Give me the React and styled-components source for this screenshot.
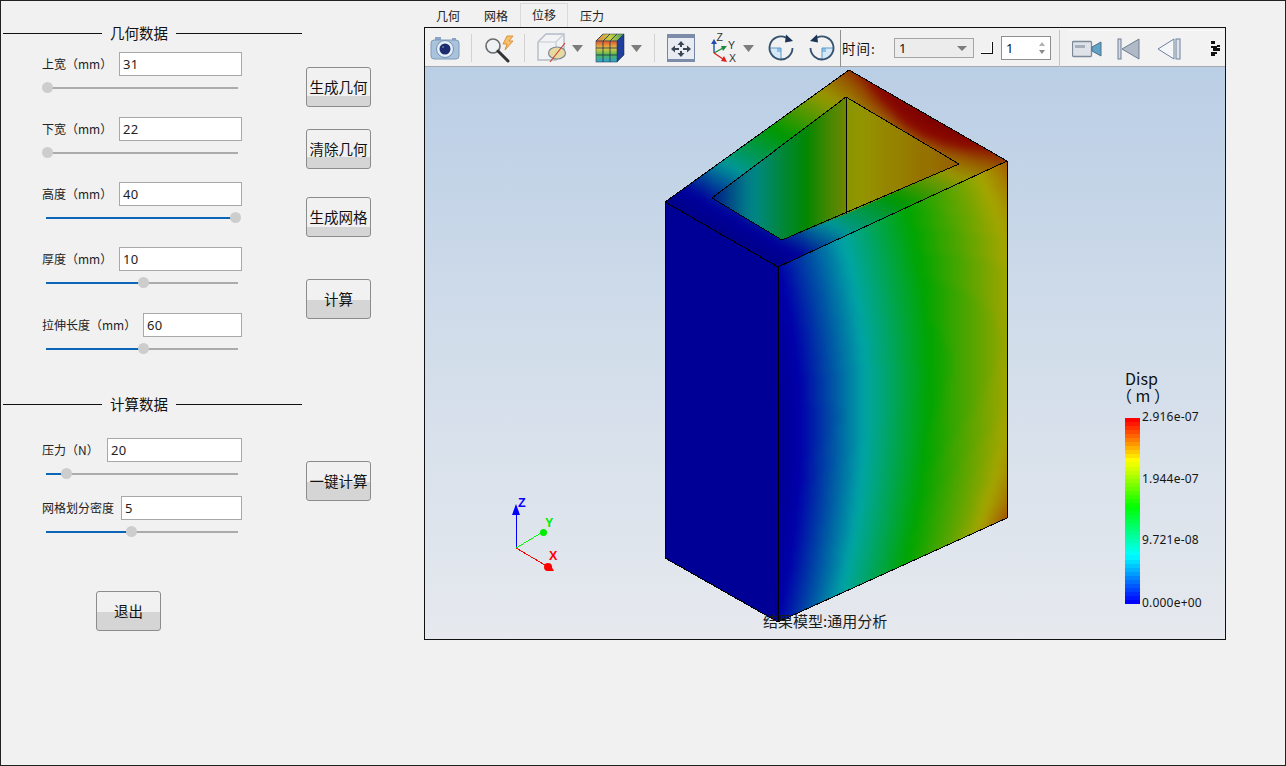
import { useMemo } from "react";
import styled, { createGlobalStyle } from "styled-components";

const CJK = `"Noto Sans CJK SC", "Noto Sans", sans-serif`;

const GlobalStyle = createGlobalStyle`
  html, body {
    margin: 0;
    padding: 0;
    background: #f1f1f1;
    overflow: hidden;
  }
  * {
    box-sizing: border-box;
  }
`;

const Window = styled.div`
  width: 1286px;
  height: 766px;
  display: flex;
  border: 1px solid #222;
  background: #f1f1f1;
  color: #111;
  font-family: ${CJK};
`;

const LeftPane = styled.div`
  width: 423px;
  padding-left: 2px;
  display: flex;
  flex-shrink: 0;
`;

const FormColumn = styled.div`
  width: 299px;
  padding-top: 22px;
`;

const ActionColumn = styled.div`
  margin-left: 4px;
  display: flex;
  flex-direction: column;
  align-items: flex-start;
`;

const Heading = styled.div`
  height: 20px;
  display: flex;
  align-items: center;
  gap: 8px;
  font-size: 14.5px;
  line-height: 20px;
  margin-top: ${(p) => p.$top || 0}px;
  &::before,
  &::after {
    content: "";
    height: 1px;
    background: #111;
  }
  &::before {
    width: 99px;
  }
  &::after {
    flex: 1;
  }
`;

const Field = styled.div`
  padding-left: 39px;
  padding-right: 60px;
  margin-top: ${(p) => p.$top}px;
`;

const FieldRow = styled.div`
  display: flex;
  align-items: center;
  height: 24px;
`;

const FieldLabel = styled.label`
  width: ${(p) => p.$w}px;
  flex-shrink: 0;
  padding-bottom: 2px;
  font-size: 12px;
  white-space: nowrap;
  color: #222;
`;

const NumberInput = styled.input`
  flex: 1;
  min-width: 0;
  height: 24px;
  border: 1px solid #a8a8a8;
  background: #fff;
  padding: 0 3px;
  font-family: "Noto Sans", sans-serif;
  font-size: 13px;
  letter-spacing: 0.4px;
  color: #222;
  outline: none;
`;

const SliderBox = styled.div`
  position: relative;
  height: 24px;
  margin: 0 4px;
  display: flex;
  align-items: center;
`;

const SliderTrack = styled.div`
  width: 100%;
  height: 2px;
  background: #ababab;
`;

const SliderFill = styled.div`
  height: 2px;
  background: #0b66b8;
`;

const SliderHandle = styled.div`
  position: absolute;
  top: 6px;
  width: 11px;
  height: 11px;
  margin-left: -4px;
  border-radius: 50%;
  background: #cdcdcd;
`;

const PushButton = styled.button`
  width: 65px;
  height: 40px;
  padding: 0 0 2px;
  margin-top: ${(p) => p.$top || 0}px;
  margin-left: ${(p) => p.$left || 0}px;
  border: 1px solid #8c8c8c;
  border-radius: 3px;
  background: linear-gradient(
    to bottom,
    #f1f1f1 ${(p) => p.$split}%,
    #d5d5d5 ${(p) => p.$split}%
  );
  font-family: ${CJK};
  font-size: 14.5px;
  white-space: nowrap;
  color: #111;
  display: block;
`;

const RightPane = styled.div`
  width: 802px;
  display: flex;
  flex-direction: column;
`;

const TabBar = styled.div`
  height: 26px;
  display: flex;
  align-items: flex-end;
`;

const Tab = styled.div`
  width: 48px;
  height: ${(p) => (p.$active ? 24 : 22)}px;
  padding-bottom: 2px;
  display: flex;
  align-items: center;
  justify-content: center;
  font-size: 12px;
  color: #222;
  background: #f1f1f1;
  border: ${(p) => (p.$active ? "1px solid #d9d9d9" : "none")};
  border-bottom: none;
`;

const ViewerFrame = styled.div`
  height: 613px;
  border: 1px solid #111;
  display: flex;
  flex-direction: column;
`;

const ToolbarRow = styled.div`
  height: 39px;
  padding-top: 2px;
  display: flex;
  align-items: center;
  background: #f1f1f1;
  border-bottom: 1px solid #a9a9a9;
  flex-shrink: 0;
`;

const ToolSlot = styled.div`
  width: ${(p) => p.$w}px;
  margin-left: ${(p) => p.$ml}px;
  display: flex;
  align-items: center;
  justify-content: center;
  flex-shrink: 0;
`;

const ToolSep = styled.div`
  width: 1px;
  height: ${(p) => p.$h || 28}px;
  margin-left: ${(p) => p.$ml}px;
  background: ${(p) => p.$color || "#d2d2d2"};
  flex-shrink: 0;
`;

const TimeLabel = styled.span`
  margin-left: 1px;
  width: 52px;
  font-size: 13.5px;
  letter-spacing: 1px;
  white-space: nowrap;
  flex-shrink: 0;
`;

const Combo = styled.div`
  width: 80px;
  height: 20px;
  border: 1px solid #a6a6a6;
  background: #ececec;
  display: flex;
  align-items: center;
  justify-content: space-between;
  padding: 0 6px 0 4px;
  font-family: "Noto Sans", sans-serif;
  font-size: 13px;
  flex-shrink: 0;
`;

const ComboArrow = styled.div`
  width: 0;
  height: 0;
  border-left: 5px solid transparent;
  border-right: 5px solid transparent;
  border-top: 5px solid #7c7c7c;
`;

const CornerMark = styled.div`
  width: 12px;
  height: 12px;
  margin-left: 7px;
  border-right: 1px solid #111;
  border-bottom: 1px solid #111;
  box-shadow: inset -1px -1px 0 #fff;
  flex-shrink: 0;
`;

const SpinBox = styled.div`
  width: 50px;
  height: 24px;
  margin-left: 8px;
  border: 1px solid #8f8f8f;
  background: #fff;
  display: flex;
  align-items: center;
  justify-content: space-between;
  padding: 0 5px 0 4px;
  font-family: "Noto Sans", sans-serif;
  font-size: 13px;
  flex-shrink: 0;
`;

const SpinArrows = styled.div`
  display: flex;
  flex-direction: column;
  gap: 4px;
  &::before,
  &::after {
    content: "";
    width: 0;
    height: 0;
    border-left: 3px solid transparent;
    border-right: 3px solid transparent;
  }
  &::before {
    border-bottom: 4px solid #b0b0b0;
  }
  &::after {
    border-top: 4px solid #8a8a8a;
  }
`;

const PlaybackBar = styled.div`
  width: 156px;
  height: 36px;
  margin-left: 8px;
  display: flex;
  align-items: center;
  position: relative;
  background: #f2f2f2;
  border-top: 1px solid #fafafa;
  flex-shrink: 0;
`;

const OverflowMark = styled.svg`
  position: absolute;
  right: 1px;
  top: 9px;
`;

const Viewport = styled.div`
  position: relative;
  flex: 1;
  overflow: hidden;
  background: linear-gradient(to bottom, #bacee5 0%, #d0dcea 45%, #e6e9ee 100%);
`;

const ModelCanvas = styled.svg`
  position: absolute;
  left: 0;
  top: 0;
`;

const Caption = styled.div`
  position: absolute;
  left: 338px;
  top: 544px;
  font-size: 15px;
  line-height: 20px;
  white-space: nowrap;
  color: #1c1c1c;
`;

const Legend = styled.div`
  position: absolute;
  left: 700px;
  top: 303px;
  width: 90px;
`;

const LegendTitle = styled.div`
  font-family: "Noto Sans CJK SC", "Noto Sans", sans-serif;
  font-size: 16px;
  line-height: 17px;
  color: #111;
  white-space: pre;
`;

const LegendUnit = styled(LegendTitle)`
  margin-left: -9px;
`;

const LegendBody = styled.div`
  display: flex;
  margin-top: 14px;
  height: 186px;
`;

const LegendBar = styled.svg`
  flex-shrink: 0;
`;

const LegendTicks = styled.div`
  position: relative;
  margin-left: 2px;
  flex: 1;
`;

const LegendTick = styled.span`
  position: absolute;
  left: 0;
  top: ${(p) => p.$top}px;
  font-family: "Noto Sans", sans-serif;
  font-size: 12px;
  letter-spacing: 0.2px;
  line-height: 14px;
  white-space: nowrap;
  color: #151515;
`;

/* result colouring: value -> dimmed jet, as the solver's shaded view shows it */
const RAMP = [
  [0, [0, 0, 148]],
  [0.1, [0, 0, 170]],
  [0.22, [0, 70, 165]],
  [0.38, [0, 165, 165]],
  [0.66, [0, 165, 0]],
  [0.92, [165, 165, 0]],
  [1.05, [165, 100, 0]],
  [1.2, [150, 10, 0]],
  [1.5, [135, 0, 0]],
];

const shade = (w, dim = 1) => {
  const v = Math.max(0, Math.min(1.5, w));
  let i = 0;
  while (i < RAMP.length - 2 && v > RAMP[i + 1][0]) i++;
  const [a, ca] = RAMP[i];
  const [b, cb] = RAMP[i + 1];
  const t = (v - a) / (b - a);
  const c = ca.map((x, k) => Math.round((x + (cb[k] - x) * t) * dim));
  return `rgb(${c[0]},${c[1]},${c[2]})`;
};

const meshPaths = ([x0, y0, x1, y1], cell, field, dim) => {
  const groups = {};
  for (let x = x0 - 12; x < x1 + 12; x += cell) {
    for (let y = y0 - 12; y < y1 + 12; y += cell) {
      const w = field(x + cell / 2, y + cell / 2);
      const key = Math.round(w * 70) / 70;
      groups[key] = (groups[key] || "") + `M${x} ${y}h${cell}v${cell}h-${cell}z`;
    }
  }
  return Object.entries(groups).map(([w, d]) => ({ d, fill: shade(Number(w), dim) }));
};

const rightField = (x, y) => {
  const u = Math.min(1, Math.max(0, (x - 778) / 229));
  const top = 267 - 106 * u;
  const v = (y - top) / 355;
  const m = Math.abs(v - 0.5) * 2;
  let w = u + 0.4 * (v - 0.5) * (v - 0.5);
  if (w > 0.66) w = 0.66 + (w - 0.66) * 0.72;
  return w + 0.1 * Math.pow(m, 6) * Math.pow(u, 8);
};

const topField = (x, y) => {
  const dx = x - 665;
  const dy = y - 202;
  const d = Math.max(0, (dx * 0.5 - dy * 0.87) / 207);
  const e = ((x - 849) * 158 + (y - 70) * 91) / (182 * 182);
  const hump = Math.exp(-Math.pow((e - 0.5) / 0.3, 2)) * Math.pow(Math.min(d, 1), 10) * 0.45;
  const lift = Math.min(1, Math.max(0, (d - 0.1) / 0.25));
  return d + 0.09 * lift + hump;
};

const wallLeftField = (x) => {
  const u = (x - 712) / 134;
  return 0.16 + 0.72 * u;
};

const wallRightField = (x) => 0.9 + ((x - 846) / 113) * 0.14;

const FACES = [
  {
    id: "left",
    points: "665,202 778,267 778,622 665,558",
    box: [665, 202, 778, 622],
    cell: 20,
    field: () => 0.02,
  },
  {
    id: "right",
    points: "778,267 1007,161 1007,518 778,622",
    box: [778, 161, 1007, 622],
    cell: 5,
    field: rightField,
  },
  {
    id: "top",
    points: "849,70 1007,161 778,267 665,202",
    box: [665, 70, 1007, 267],
    cell: 5,
    field: topField,
    dim: 0.92,
  },
  {
    id: "walla",
    points: "712,198 846,97 846,214 782,240",
    box: [712, 97, 846, 240],
    cell: 5,
    field: wallLeftField,
    dim: 0.82,
  },
  {
    id: "wallb",
    points: "846,97 959,164 846,214",
    box: [846, 97, 959, 214],
    cell: 5,
    field: wallRightField,
    dim: 0.9,
  },
];

const EDGES = [
  "665,202 849,70 1007,161 778,267 665,202",
  "665,202 665,558 778,622 1007,518 1007,161",
  "778,267 778,622",
  "712,198 846,97 959,164 782,240 712,198",
  "846,97 846,214",
];

const Model = () => {
  const faces = useMemo(
    () => FACES.map((f) => ({ ...f, paths: meshPaths(f.box, f.cell, f.field, f.dim) })),
    []
  );
  return (
    <ModelCanvas width="800" height="572" viewBox="425 67 800 572">
      <defs>
        <filter id="soften" colorInterpolationFilters="sRGB" x="-5%" y="-5%" width="110%" height="110%">
          <feGaussianBlur stdDeviation="3" />
        </filter>
        {faces.map((f) => (
          <clipPath id={`face-${f.id}`} key={f.id}>
            <polygon points={f.points} />
          </clipPath>
        ))}
      </defs>
      {faces.map((f) => (
        <g clipPath={`url(#face-${f.id})`} key={f.id}>
          <g filter="url(#soften)" shapeRendering="crispEdges">
            {f.paths.map((p) => (
              <path key={p.fill} d={p.d} fill={p.fill} />
            ))}
          </g>
        </g>
      ))}
      <g fill="none" stroke="#000" strokeWidth="1" shapeRendering="crispEdges">
        {EDGES.map((pts) => (
          <polyline key={pts} points={pts} />
        ))}
      </g>
      <g shapeRendering="crispEdges" strokeWidth="1" fill="none">
        <line x1="516" y1="548" x2="516" y2="512" stroke="#0000ff" />
        <line x1="516" y1="548" x2="541" y2="533" stroke="#00ff00" />
        <line x1="516" y1="548" x2="545" y2="565" stroke="#ff0000" />
      </g>
      <polygon points="516,504 520,515 512,515" fill="#0000ff" />
      <circle cx="543.5" cy="532.5" r="3.5" fill="#00ee00" />
      <circle cx="548" cy="567" r="4" fill="#ff0000" />
      <polygon points="554,571 546,571 550,564" fill="#ff0000" />
      <g fontFamily="Liberation Sans, sans-serif" fontWeight="700" fontSize="12.5">
        <text x="518" y="507" fill="#0000ff">Z</text>
        <text x="545" y="527" fill="#00ee00">Y</text>
        <text x="549" y="560" fill="#ff0000">X</text>
      </g>
    </ModelCanvas>
  );
};

const jetBand = (t) => {
  const stops = [
    [0, [0, 0, 255]],
    [0.255, [0, 255, 255]],
    [0.523, [0, 255, 0]],
    [0.774, [255, 255, 0]],
    [1, [255, 0, 0]],
  ];
  let i = 0;
  while (i < stops.length - 2 && t > stops[i + 1][0]) i++;
  const k = (t - stops[i][0]) / (stops[i + 1][0] - stops[i][0]);
  const c = stops[i][1].map((x, n) => Math.round(x + (stops[i + 1][1][n] - x) * k));
  return `rgb(${c[0]},${c[1]},${c[2]})`;
};

const BANDS = Array.from({ length: 46 }, (_, i) => i);

const ColorLegend = () => (
  <Legend>
    <LegendTitle>Disp</LegendTitle>
    <LegendUnit>（ m ）</LegendUnit>
    <LegendBody>
      <LegendBar width="15" height="186" viewBox="0 0 15 186" shapeRendering="crispEdges">
        {BANDS.map((i) => (
          <rect
            key={i}
            x="0"
            y={(i * 186) / BANDS.length}
            width="15"
            height={186 / BANDS.length + 1}
            fill={jetBand(1 - i / (BANDS.length - 1))}
          />
        ))}
      </LegendBar>
      <LegendTicks>
        <LegendTick $top={-8}>2.916e-07</LegendTick>
        <LegendTick $top={54}>1.944e-07</LegendTick>
        <LegendTick $top={115}>9.721e-08</LegendTick>
        <LegendTick $top={178}>0.000e+00</LegendTick>
      </LegendTicks>
    </LegendBody>
  </Legend>
);

const CameraIcon = () => (
  <svg width="30" height="24" viewBox="0 0 30 24">
    <rect x="5" y="1" width="6" height="4" fill="#8aa6c4" />
    <rect x="22" y="2" width="4" height="3" fill="#8aa6c4" />
    <rect x="1" y="4" width="28" height="19" rx="3" fill="#aac3dd" stroke="#7f9bb8" />
    <circle cx="15" cy="13" r="8.5" fill="#e8eff7" stroke="#7190b2" />
    <circle cx="15" cy="13" r="5.5" fill="#1b2d6e" />
    <circle cx="13" cy="11" r="1" fill="#5f7ab5" />
  </svg>
);

const ZoomBoltIcon = () => (
  <svg width="34" height="30" viewBox="0 0 34 30">
    <circle cx="11" cy="13" r="7" fill="#eef2f5" stroke="#6a6a6a" strokeWidth="1.6" />
    <path d="M16 18 L26 28" stroke="#333" strokeWidth="3" strokeLinecap="round" />
    <path d="M25 3 L31 3 L27 8 L31 8 L23 17 L25 11 L21 11 Z" fill="#f6c070" stroke="#d98a28" strokeWidth="0.9" />
  </svg>
);

const SectionBoxIcon = () => (
  <svg width="30" height="32" viewBox="0 0 30 32">
    <path d="M1 10 L9 2 L27 2 L27 20 L19 28 L1 28 Z" fill="#f1f3f5" stroke="#b4bcc6" strokeWidth="1.4" />
    <path d="M1 10 L19 10 L27 2 M19 10 L19 28" fill="none" stroke="#c5ccd4" strokeWidth="1.2" />
    <ellipse cx="20" cy="21" rx="8.5" ry="6" fill="#e8d9a0" stroke="#7a8794" strokeWidth="1.2" />
    <path d="M13 30 L28 11" stroke="#c8452c" strokeWidth="1.2" />
  </svg>
);

const ResultCubeIcon = () => (
  <svg width="30" height="30" viewBox="0 0 30 30">
    <defs>
      <linearGradient id="cubeFront" x1="0" y1="0" x2="0" y2="1">
        <stop offset="0" stopColor="#e05030" />
        <stop offset="0.35" stopColor="#e8c840" />
        <stop offset="0.65" stopColor="#50b850" />
        <stop offset="1" stopColor="#30a0d8" />
      </linearGradient>
      <linearGradient id="cubeTop" x1="0" y1="0" x2="1" y2="0">
        <stop offset="0" stopColor="#e88040" />
        <stop offset="0.5" stopColor="#c8d040" />
        <stop offset="1" stopColor="#40a060" />
      </linearGradient>
    </defs>
    <path d="M1 8 L8 1 L29 1 L22 8 Z" fill="url(#cubeTop)" stroke="#335" strokeWidth="0.5" />
    <path d="M22 8 L29 1 L29 22 L22 29 Z" fill="#1f3f9f" stroke="#123" strokeWidth="0.5" />
    <rect x="1" y="8" width="21" height="21" fill="url(#cubeFront)" stroke="#345" strokeWidth="0.6" />
    <path d="M8 8 V29 M15 8 V29 M1 15 H22 M1 22 H22 M8 1 L1 8 M15 1 L8 8 M22 1 L15 8" stroke="#24405a" strokeWidth="0.9" fill="none" />
  </svg>
);

const DropArrow = () => (
  <svg width="13" height="7" viewBox="0 0 13 7">
    <path d="M1 0 H12 L6.5 7 Z" fill="#7d7d7d" />
  </svg>
);

const FitIcon = () => (
  <svg width="28" height="28" viewBox="0 0 28 28">
    <rect x="0.5" y="0.5" width="27" height="27" fill="#e8ecf2" stroke="#7486a0" />
    <rect x="0" y="0" width="28" height="4" fill="#7c8ca8" />
    <rect x="0" y="25" width="28" height="3" fill="#7c8ca8" />
    <g fill="#3a4654">
      <path d="M14 7 L17.5 11 H15 V13 H13 V11 H10.5 Z" />
      <path d="M14 23 L17.5 19 H15 V17 H13 V19 H10.5 Z" />
      <path d="M4 15 L8 11.5 V14 H12 V16 H8 V18.5 Z" />
      <path d="M24 15 L20 11.5 V14 H16 V16 H20 V18.5 Z" />
    </g>
  </svg>
);

const AxesIcon = () => (
  <svg width="30" height="32" viewBox="0 0 30 32">
    <path d="M4 21 V11" stroke="#1f4fb0" strokeWidth="1.4" />
    <path d="M4 7 L7 12 H1 Z" fill="#1f4fb0" />
    <path d="M4 21 L13 16" stroke="#1f8a3a" strokeWidth="1.4" />
    <path d="M17 14 L13 19 L11 14 Z" fill="#1f8a3a" />
    <path d="M4 21 L13 27" stroke="#e02020" strokeWidth="1.4" />
    <path d="M17 30 L11 29 L14 24 Z" fill="#e02020" />
    <g fontFamily="Liberation Sans, sans-serif" fontSize="10.5" fill="#333">
      <text x="6.5" y="8.5">Z</text>
      <text x="18" y="16.5">Y</text>
      <text x="19" y="29.5">X</text>
    </g>
  </svg>
);

const RotateIcon = ({ mirror }) => (
  <svg width="28" height="28" viewBox="0 0 28 28">
    <g transform={mirror ? "translate(28 0) scale(-1 1)" : undefined}>
      <path d="M14 14 H2.5 A11.5 11.5 0 0 0 14 25.5 Z" fill="#d6e8f6" />
      <rect x="10" y="14" width="4" height="4" fill="#8cc0e6" />
      <path d="M14 14 H2.5 M14 14 V25.5" stroke="#5d9acb" strokeWidth="1" />
      <path d="M19 3.6 A11.5 11.5 0 1 0 25.5 14" fill="none" stroke="#35526f" strokeWidth="1.8" />
      <path d="M19 0.5 L26 7 L18 8.5 Z" fill="#1c3557" />
    </g>
  </svg>
);

const MovieIcon = () => (
  <svg width="30" height="20" viewBox="0 0 30 20">
    <rect x="0.5" y="2.5" width="19" height="15" rx="1" fill="#dfe3e9" stroke="#7c8a9a" strokeWidth="1.3" />
    <rect x="3" y="6" width="10" height="3" fill="#a6b0bc" />
    <path d="M20 8 L29 3 V17 L20 12 Z" fill="#5fa4c6" stroke="#4f6f8a" />
  </svg>
);

const SkipBackIcon = () => (
  <svg width="23" height="24" viewBox="0 0 23 24">
    <rect x="1" y="2" width="3" height="20" fill="#d4dae2" stroke="#6d7f95" />
    <path d="M22 2 V22 L5 12 Z" fill="#b0bac6" stroke="#6d7f95" />
  </svg>
);

const StepBackIcon = () => (
  <svg width="24" height="24" viewBox="0 0 24 24">
    <path d="M17 2 V22 L1 12 Z" fill="#f5f6f8" stroke="#6d82a0" />
    <rect x="19" y="2" width="4" height="20" fill="#dfe3e8" stroke="#6d82a0" />
  </svg>
);

const ParamField = ({ label, width, value, percent, top }) => (
  <Field $top={top}>
    <FieldRow>
      <FieldLabel $w={width}>{label}</FieldLabel>
      <NumberInput defaultValue={value} />
    </FieldRow>
    <SliderBox>
      <SliderTrack>
        <SliderFill style={{ width: `${percent}%` }} />
      </SliderTrack>
      <SliderHandle style={{ left: `${percent}%` }} />
    </SliderBox>
  </Field>
);

const Toolbar = () => (
  <ToolbarRow>
    <ToolSlot $w={30} $ml={5}><CameraIcon /></ToolSlot>
    <ToolSep $ml={11} />
    <ToolSlot $w={34} $ml={10}><ZoomBoltIcon /></ToolSlot>
    <ToolSep $ml={8} />
    <ToolSlot $w={30} $ml={12}><SectionBoxIcon /></ToolSlot>
    <ToolSlot $w={13} $ml={4}><DropArrow /></ToolSlot>
    <ToolSlot $w={30} $ml={11}><ResultCubeIcon /></ToolSlot>
    <ToolSlot $w={13} $ml={5}><DropArrow /></ToolSlot>
    <ToolSep $ml={11} />
    <ToolSlot $w={28} $ml={12}><FitIcon /></ToolSlot>
    <ToolSlot $w={30} $ml={15}><AxesIcon /></ToolSlot>
    <ToolSlot $w={13} $ml={2}><DropArrow /></ToolSlot>
    <ToolSlot $w={28} $ml={12}><RotateIcon /></ToolSlot>
    <ToolSlot $w={28} $ml={13}><RotateIcon mirror /></ToolSlot>
    <ToolSep $ml={4} $h={37} $color="#8f8f8f" />
    <TimeLabel>时间:</TimeLabel>
    <Combo>
      1
      <ComboArrow />
    </Combo>
    <CornerMark />
    <SpinBox>
      1
      <SpinArrows />
    </SpinBox>
    <ToolSep $ml={8} $h={37} $color="#c4c4c4" />
    <PlaybackBar>
      <ToolSlot $w={30} $ml={4}><MovieIcon /></ToolSlot>
      <ToolSlot $w={23} $ml={15}><SkipBackIcon /></ToolSlot>
      <ToolSlot $w={24} $ml={17}><StepBackIcon /></ToolSlot>
      <OverflowMark width="13" height="17" viewBox="0 0 13 17" shapeRendering="crispEdges">
        <path d="M1 1h4v3h-4z M1 6h6v2h-6z M3 8h7v3h-7z M1 12h6v2h-6z M1 14h4v2h-4z M7 5h3v2h-3z" fill="#111" />
      </OverflowMark>
    </PlaybackBar>
  </ToolbarRow>
);

const App = () => (
  <>
    <GlobalStyle />
    <Window>
      <LeftPane>
        <FormColumn>
          <Heading>几何数据</Heading>
          <ParamField label="上宽（mm）" width={77} value="31" percent={0} top={9} />
          <ParamField label="下宽（mm）" width={77} value="22" percent={0} top={17} />
          <ParamField label="高度（mm）" width={77} value="40" percent={98} top={17} />
          <ParamField label="厚度（mm）" width={77} value="10" percent={50} top={17} />
          <ParamField label="拉伸长度（mm）" width={101} value="60" percent={50} top={18} />
          <Heading $top={33}>计算数据</Heading>
          <ParamField label="压力（N）" width={65} value="20" percent={10} top={24} />
          <ParamField label="网格划分密度" width={79} value="5" percent={44} top={10} />
          <PushButton $top={47} $left={93} $split={52}>退出</PushButton>
        </FormColumn>
        <ActionColumn>
          <PushButton $top={66} $split={75}>生成几何</PushButton>
          <PushButton $top={22} $split={70}>清除几何</PushButton>
          <PushButton $top={28} $split={75}>生成网格</PushButton>
          <PushButton $top={42} $split={52}>计算</PushButton>
          <PushButton $top={142} $split={52}>一键计算</PushButton>
        </ActionColumn>
      </LeftPane>
      <RightPane>
        <TabBar>
          <Tab>几何</Tab>
          <Tab>网格</Tab>
          <Tab $active>位移</Tab>
          <Tab>压力</Tab>
        </TabBar>
        <ViewerFrame>
          <Toolbar />
          <Viewport>
            <Model />
            <ColorLegend />
            <Caption>结果模型:通用分析</Caption>
          </Viewport>
        </ViewerFrame>
      </RightPane>
    </Window>
  </>
);

export default App;
